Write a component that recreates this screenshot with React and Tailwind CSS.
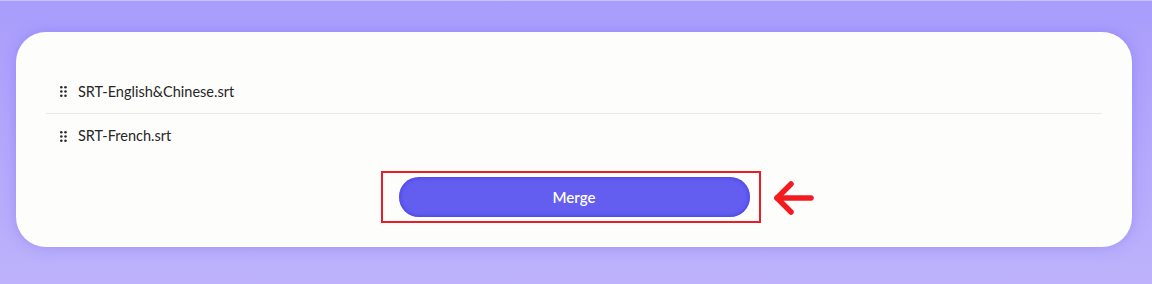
import React from "react";

function DragIcon() {
  return (
    <svg width="7" height="11" viewBox="0 0 7 11" className="shrink-0 text-[#2b2b2b]" fill="currentColor">
      <circle cx="1.3" cy="1.3" r="1.3" />
      <circle cx="5.5" cy="1.3" r="1.3" />
      <circle cx="1.3" cy="5.5" r="1.3" />
      <circle cx="5.5" cy="5.5" r="1.3" />
      <circle cx="1.3" cy="9.7" r="1.3" />
      <circle cx="5.5" cy="9.7" r="1.3" />
    </svg>
  );
}

function Row({ name, border }) {
  return (
    <div className={`flex h-[44px] items-center gap-[11px] pl-[14px] ${border ? "border-b border-[#e9e9ec]" : ""}`}>
      <DragIcon />
      <span className="text-[14.5px] text-[#262626]">{name}</span>
    </div>
  );
}

export default function App() {
  return (
    <div
      className="h-[284px] w-full border-t border-[#cac2fb] bg-gradient-to-b from-[#a99dfc] to-[#bdb2fb] pl-[16px] pr-[20px] pt-[31px]"
      style={{ fontFamily: "Lato, 'Noto Sans', sans-serif" }}
    >
      <div className="flex h-[215px] flex-col rounded-[30px] bg-[#fdfdfc] px-[30px] pt-[38px] shadow-[0_0_14px_rgba(110,90,240,0.35)]">
        <Row name="SRT-English&Chinese.srt" border />
        <Row name="SRT-French.srt" />
        <div className="mt-[19px] flex justify-center">
          <div className="relative">
            <button className="flex h-[40px] w-[351px] items-center justify-center rounded-full bg-[#635df0] text-[15px] font-semibold text-white shadow-[inset_0_0_4px_rgba(60,50,225,0.9)]">
              Merge
            </button>
            <div className="pointer-events-none absolute -bottom-[6px] -left-[18px] -right-[11px] -top-[6px] border-2 border-[#ec1c24]"></div>
            <svg
              className="absolute left-[374px] top-[4px]"
              width="42"
              height="34"
              viewBox="0 0 42 34"
              fill="none"
              stroke="#f21b1f"
              strokeWidth="5.5"
              strokeLinecap="round"
              strokeLinejoin="round"
            >
              <path d="M38 17H4" />
              <path d="M18 3L4 17l14 14" />
            </svg>
          </div>
        </div>
      </div>
    </div>
  );
}
